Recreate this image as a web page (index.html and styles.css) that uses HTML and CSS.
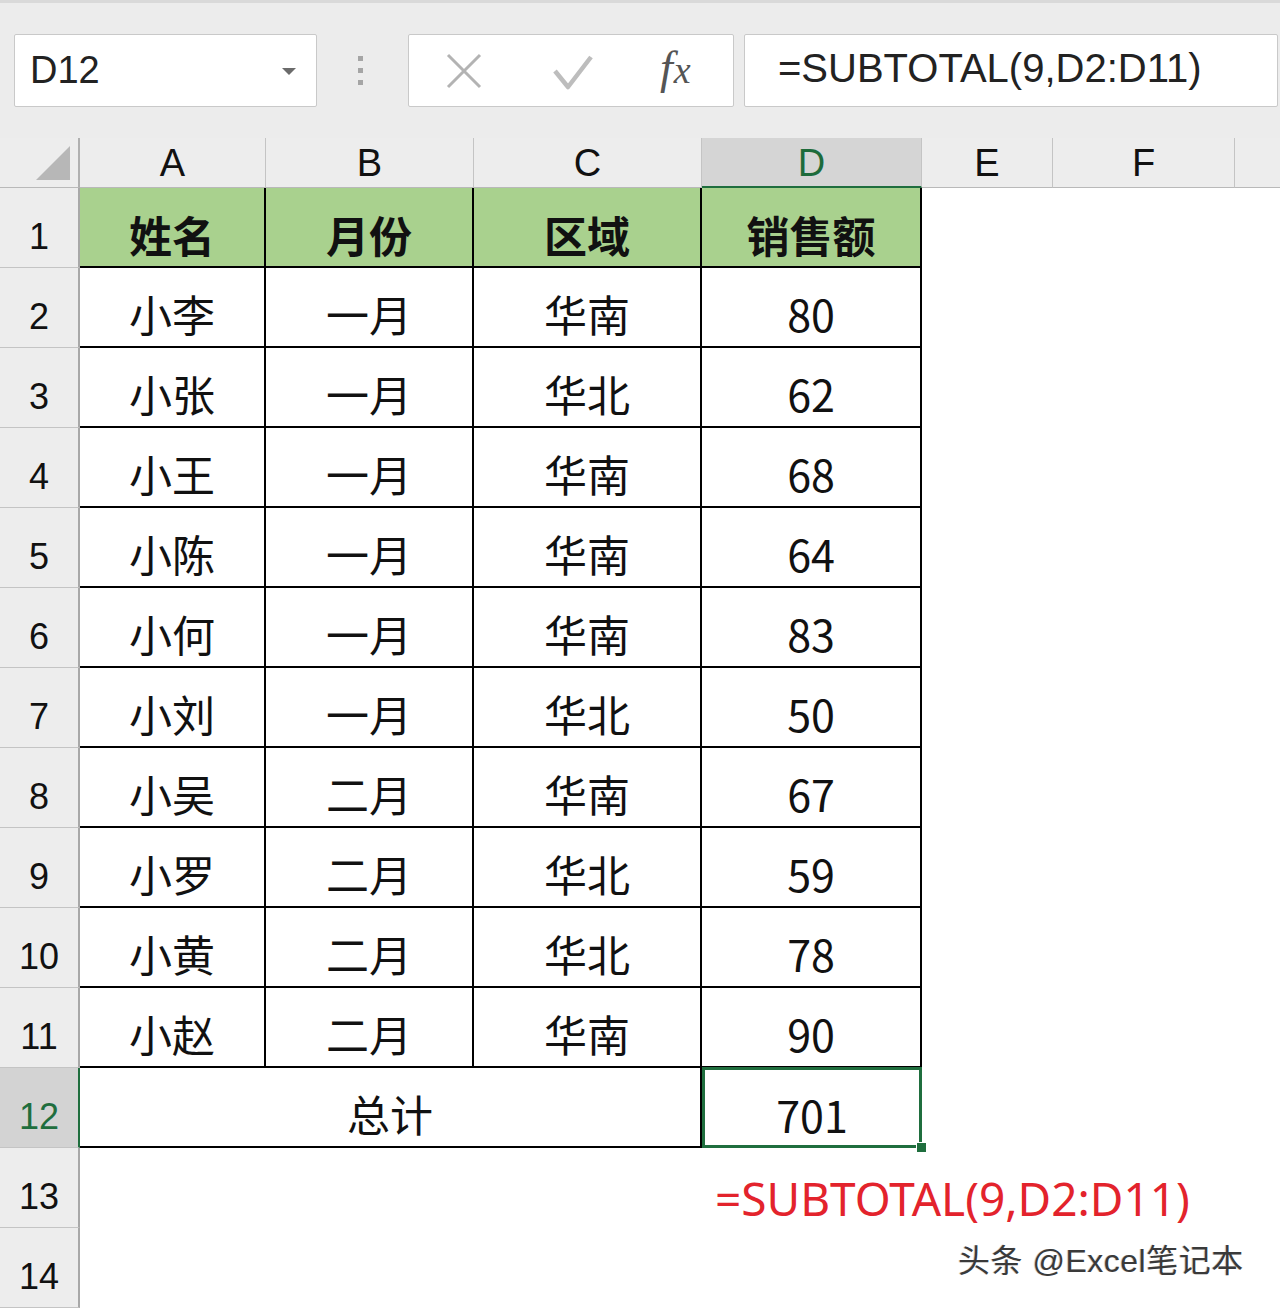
FILE: index.html
```html
<!DOCTYPE html>
<html lang="zh-CN">
<head>
<meta charset="utf-8">
<title>SUBTOTAL</title>
<link rel="stylesheet" href="styles.css">
</head>
<body>
<div class="app">
  <div class="toolbar">
    <div class="namebox">
      <span class="name">D12</span>
      <svg class="caret" width="14" height="8" viewBox="0 0 14 8"><path d="M0 0H14L7 7Z" fill="#6b6b6b"/></svg>
    </div>
    <div class="grip"><i></i><i></i><i></i></div>
    <div class="buttons">
      <svg class="btn-x" width="36" height="36" viewBox="0 0 36 36"><path d="M2 2L34 34M34 2L2 34" stroke="#b3b3b3" stroke-width="3" fill="none"/></svg>
      <svg class="btn-ok" width="40" height="36" viewBox="0 0 40 36"><path d="M2 17L15 33L38 3" stroke="#bdbdbd" stroke-width="4.5" fill="none" stroke-linejoin="round"/></svg>
      <span class="fx"><span class="f">f</span><span class="x">x</span></span>
    </div>
    <div class="formula">=SUBTOTAL(9,D2:D11)</div>
  </div>

  <div class="sheet">
    <div class="ch corner"><svg width="36" height="36" viewBox="0 0 36 36"><path d="M35 1V35H1Z" fill="#b7b7b7"/></svg></div>
    <div class="ch">A</div>
    <div class="ch">B</div>
    <div class="ch">C</div>
    <div class="ch sel">D</div>
    <div class="ch">E</div>
    <div class="ch">F</div>
    <div class="ch last"></div>

    <div class="rh">1</div>
    <div class="c hd">姓名</div><div class="c hd">月份</div><div class="c hd">区域</div><div class="c hd">销售额</div>
    <div class="e"></div><div class="e"></div><div class="e"></div>

    <div class="rh">2</div>
    <div class="c">小李</div><div class="c">一月</div><div class="c">华南</div><div class="c">80</div>
    <div class="e"></div><div class="e"></div><div class="e"></div>

    <div class="rh">3</div>
    <div class="c">小张</div><div class="c">一月</div><div class="c">华北</div><div class="c">62</div>
    <div class="e"></div><div class="e"></div><div class="e"></div>

    <div class="rh">4</div>
    <div class="c">小王</div><div class="c">一月</div><div class="c">华南</div><div class="c">68</div>
    <div class="e"></div><div class="e"></div><div class="e"></div>

    <div class="rh">5</div>
    <div class="c">小陈</div><div class="c">一月</div><div class="c">华南</div><div class="c">64</div>
    <div class="e"></div><div class="e"></div><div class="e"></div>

    <div class="rh">6</div>
    <div class="c">小何</div><div class="c">一月</div><div class="c">华南</div><div class="c">83</div>
    <div class="e"></div><div class="e"></div><div class="e"></div>

    <div class="rh">7</div>
    <div class="c">小刘</div><div class="c">一月</div><div class="c">华北</div><div class="c">50</div>
    <div class="e"></div><div class="e"></div><div class="e"></div>

    <div class="rh">8</div>
    <div class="c">小吴</div><div class="c">二月</div><div class="c">华南</div><div class="c">67</div>
    <div class="e"></div><div class="e"></div><div class="e"></div>

    <div class="rh">9</div>
    <div class="c">小罗</div><div class="c">二月</div><div class="c">华北</div><div class="c">59</div>
    <div class="e"></div><div class="e"></div><div class="e"></div>

    <div class="rh">10</div>
    <div class="c">小黄</div><div class="c">二月</div><div class="c">华北</div><div class="c">78</div>
    <div class="e"></div><div class="e"></div><div class="e"></div>

    <div class="rh">11</div>
    <div class="c">小赵</div><div class="c">二月</div><div class="c">华南</div><div class="c">90</div>
    <div class="e"></div><div class="e"></div><div class="e"></div>

    <div class="rh rsel">12</div>
    <div class="c merged">总计</div>
    <div class="c active">701<span class="handle"></span></div>
    <div class="e"></div><div class="e"></div><div class="e"></div>

    <div class="rh">13</div>
    <div class="e"></div><div class="e"></div><div class="e"></div>
    <div class="e note">=SUBTOTAL(9,D2:D11)</div>
    <div class="e"></div><div class="e"></div><div class="e"></div>

    <div class="rh">14</div>
    <div class="e"></div><div class="e"></div><div class="e"></div><div class="e"></div>
    <div class="e"></div><div class="e"></div><div class="e"></div>
  </div>

  <div class="watermark">头条 @Excel笔记本</div>
</div>
</body>
</html>
```

FILE: styles.css
```css
html, body {
  margin: 0;
  padding: 0;
}
body {
  width: 1280px;
  height: 1308px;
  overflow: hidden;
  background: #ffffff;
  font-family: "Liberation Sans", Arial, sans-serif;
}
.app {
  position: relative;
  width: 1280px;
  height: 1308px;
}

/* toolbar */
.toolbar {
  box-sizing: border-box;
  height: 138px;
  background: #ececec;
  border-top: 3px solid #d9d9d9;
  padding: 31px 2px 0 14px;
  display: flex;
  align-items: flex-start;
}
.namebox,
.buttons,
.formula {
  box-sizing: border-box;
  height: 73px;
  background: #ffffff;
  border: 1px solid #c9c9c9;
  border-radius: 2px;
}
.namebox {
  width: 303px;
  display: flex;
  align-items: center;
  justify-content: space-between;
  padding: 0 20px 0 15px;
}
.name {
  font-size: 38px;
  color: #222;
}
.caret {
  margin-top: 2px;
}
.grip {
  width: 91px;
  height: 73px;
  display: flex;
  flex-direction: column;
  align-items: center;
  justify-content: center;
  gap: 7px;
  padding-right: 4px;
  box-sizing: border-box;
}
.grip i {
  display: block;
  width: 5px;
  height: 5px;
  background: #a5a5a5;
}
.buttons {
  width: 326px;
  display: flex;
  align-items: center;
  padding-left: 37px;
}
.btn-x {
  margin-right: 71px;
}
.btn-ok {
  margin-right: 67px;
  margin-top: 2px;
}
.fx {
  font-family: "Liberation Serif", "Times New Roman", serif;
  font-style: italic;
  font-size: 46px;
  color: #555;
  line-height: 1;
  margin-top: -6px;
}
.fx .x {
  font-size: 38px;
  margin-left: 1px;
}
.formula {
  flex: 1;
  margin-left: 10px;
  padding-left: 33px;
  display: flex;
  align-items: center;
  font-size: 40px;
  color: #222;
  white-space: nowrap;
  padding-bottom: 4px;
}

/* sheet */
.sheet {
  display: grid;
  grid-template-columns: 80px 186px 208px 228px 220px 131px 182px 45px;
  grid-template-rows: 50px repeat(14, 80px);
}
.ch {
  box-sizing: border-box;
  background: #ededed;
  border-right: 1px solid #c4c4c4;
  border-bottom: 1px solid #b9b9b9;
  display: flex;
  align-items: center;
  justify-content: center;
  font-size: 38px;
  color: #111;
  padding-top: 2px;
}
.ch.corner {
  border-right: 2px solid #b0b0b0;
  justify-content: flex-end;
  align-items: flex-end;
  padding: 0 7px 6px 0;
}
.ch.sel {
  background: #d5d5d5;
  color: #1d6b3b;
  border-bottom: 2px solid #1f6e3e;
}
.ch.last {
  border-right: none;
}
.rh {
  box-sizing: border-box;
  background: #ededed;
  border-right: 2px solid #a8a8a8;
  border-bottom: 1px solid #c4c4c4;
  display: flex;
  align-items: center;
  justify-content: center;
  font-size: 36px;
  color: #111;
  padding-top: 18px;
}
.rh.rsel {
  background: #d3d3d3;
  color: #1f6e3e;
  border-right-color: #1f6e3e;
}
.c {
  box-sizing: border-box;
  background: #ffffff;
  border-right: 2px solid #000;
  border-bottom: 2px solid #000;
  display: flex;
  align-items: center;
  justify-content: center;
  font-family: "Noto Sans CJK SC", "Noto Sans", sans-serif;
  font-size: 43px;
  color: #111;
  padding-top: 13px;
  line-height: 1;
}
.c.hd {
  background: #a9d18e;
  font-weight: 700;
  padding-top: 14px;
}
.c.merged {
  grid-column: span 3;
}
.c.active {
  position: relative;
  z-index: 2;
  border: 3px solid #1f6e3e;
  margin-top: -1px;
}
.handle {
  position: absolute;
  right: -8px;
  bottom: -8px;
  width: 9px;
  height: 9px;
  background: #1f6e3e;
  border: 1px solid #ffffff;
}
.e {
  background: #ffffff;
}
.note {
  position: relative;
  overflow: visible;
  white-space: nowrap;
  font-family: "Noto Sans", sans-serif;
  font-size: 46px;
  color: #e3232c;
  padding: 27px 0 0 13px;
  line-height: 1;
  z-index: 1;
}

.watermark {
  position: absolute;
  left: 958px;
  top: 1242px;
  font-family: "Liberation Sans", "Noto Sans CJK SC", sans-serif;
  font-size: 32px;
  line-height: 1.2;
  color: #3a3a3a;
  text-shadow: 1px 1px 0 #ffffff, -1px 0 0 #cfcfcf;
  white-space: nowrap;
  letter-spacing: 0.5px;
}
```
